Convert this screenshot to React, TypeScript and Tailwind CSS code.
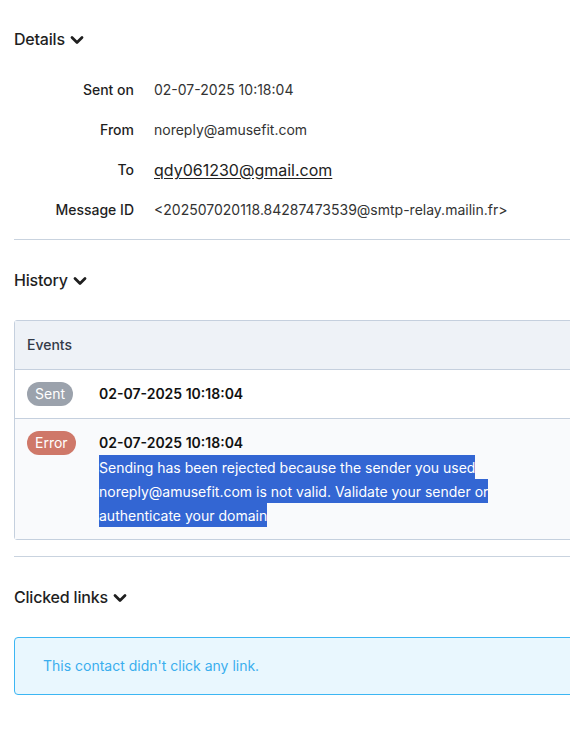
import React from "react";

function Chevron() {
  return (
    <svg width="14" height="10" viewBox="0 0 14 10" className="ml-[5px] mt-[2px]">
      <path d="M2 2.5 L7 7.5 L12 2.5" fill="none" stroke="#1f1f1f" strokeWidth="2.8" strokeLinecap="round" strokeLinejoin="round" />
    </svg>
  );
}

function SectionTitle({ title }: { title: string }) {
  return (
    <div className="flex h-6 items-center text-base font-medium tracking-[-0.2px] text-[#1f1f1f]">
      <span>{title}</span>
      <Chevron />
    </div>
  );
}

function DetailRow({ label, children }: { label: string; children: React.ReactNode }) {
  return (
    <div className="flex h-10 items-center">
      <div className="w-[120px] text-right text-sm font-medium text-[#1f1f1f]">{label}</div>
      <div className="pl-5 text-sm text-[#333]">{children}</div>
    </div>
  );
}

export default function App() {
  return (
    <div className="w-[570px] h-[745px] overflow-hidden bg-white" style={{ fontFamily: "Inter, 'Noto Sans', sans-serif" }}>
      <div className="w-[640px] pl-[14px]">
        {/* Details */}
        <div className="pt-[27px]">
          <SectionTitle title="Details" />
          <div className="mt-[19px] mb-[9px]">
            <DetailRow label="Sent on">02-07-2025 10:18:04</DetailRow>
            <DetailRow label="From">noreply@amusefit.com</DetailRow>
            <DetailRow label="To">
              <span className="text-base underline text-[#222] underline-offset-2">qdy061230@gmail.com</span>
            </DetailRow>
            <DetailRow label="Message ID">&lt;202507020118.84287473539@smtp-relay.mailin.fr&gt;</DetailRow>
          </div>
        </div>
        <div className="border-t border-[#c9d3df]" />

        {/* History */}
        <div className="pt-7">
          <SectionTitle title="History" />
          <div className="mt-7 rounded-[3px] border border-[#c5d0de] text-sm">
            <div className="flex h-12 items-center bg-[#eef2f7] pl-3 font-medium text-[#333b48]">Events</div>
            <div className="flex items-center border-t border-[#c5d0de] py-3">
              <div className="w-[84px] pl-3">
                <span className="inline-flex h-6 items-center rounded-full bg-[#9ba2ac] px-2 text-white">Sent</span>
              </div>
              <div className="leading-6 font-semibold text-[#111]">02-07-2025 10:18:04</div>
            </div>
            <div className="flex items-start border-t border-[#c5d0de] bg-[#f9fafc] py-3">
              <div className="w-[84px] pl-3">
                <span className="inline-flex h-6 items-center rounded-full bg-[#cf7869] px-2 text-white">Error</span>
              </div>
              <div className="w-[400px] leading-6">
                <div className="font-semibold text-[#111]">02-07-2025 10:18:04</div>
                <div>
                  <span className="bg-[#3366d3] py-[3.5px] text-white [box-decoration-break:clone]">
                    Sending has been rejected because the sender you used noreply@amusefit.com is not valid. Validate your sender or authenticate your domain
                  </span>
                </div>
              </div>
            </div>
          </div>
        </div>
        <div className="mt-4 border-t border-[#c9d3df]" />

        {/* Clicked links */}
        <div className="pt-7">
          <SectionTitle title="Clicked links" />
          <div className="mt-7 flex h-[58px] items-center rounded-[4px] border border-[#3cb6f3] bg-[#e9f7fe] pl-7 text-sm text-[#3aaeee]">
            This contact didn't click any link.
          </div>
        </div>
      </div>
    </div>
  );
}
